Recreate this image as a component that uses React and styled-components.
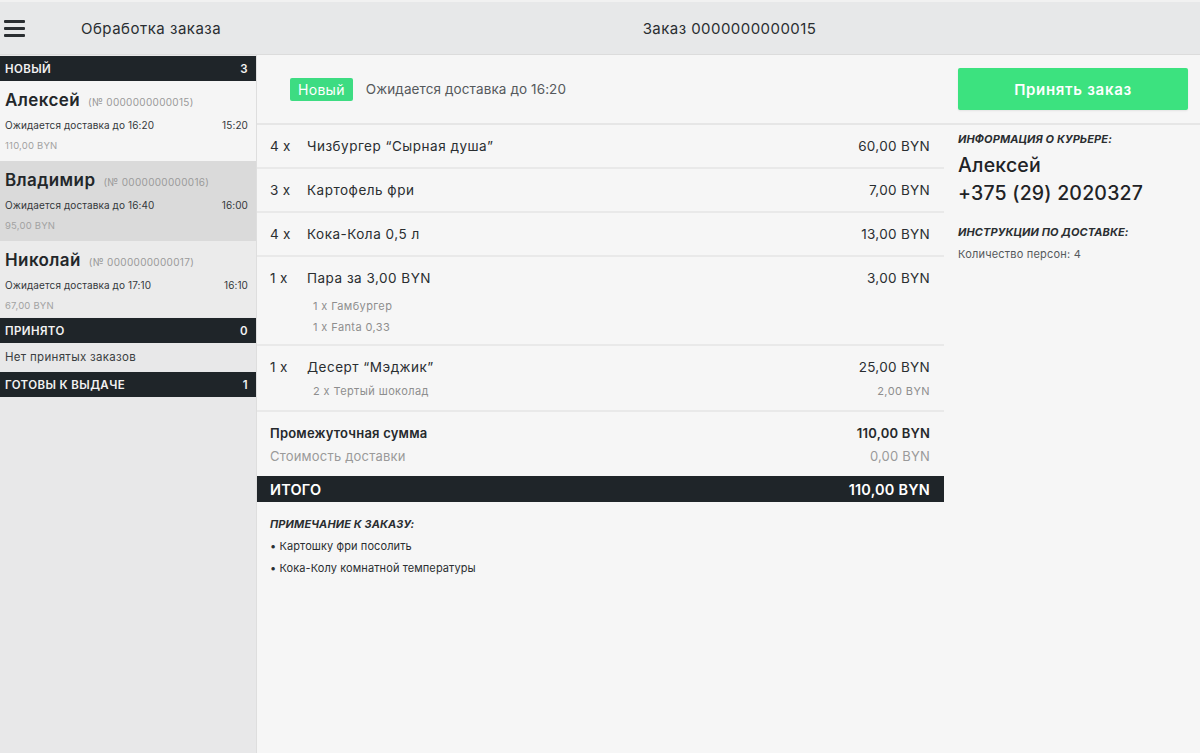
import React from 'react';
import styled, { createGlobalStyle } from 'styled-components';

// ─── DATA ──────────────────────────────────────────────────────

const GROUPS = [
  {
    title: 'Новый',
    count: 3,
    orders: [
      { name: 'Алексей', num: '0000000000015', eta: '16:20', time: '15:20', sum: '110,00 BYN', tone: 'light' },
      { name: 'Владимир', num: '0000000000016', eta: '16:40', time: '16:00', sum: '95,00 BYN', tone: 'active' },
      { name: 'Николай', num: '0000000000017', eta: '17:10', time: '16:10', sum: '67,00 BYN', tone: 'plain' },
    ],
  },
  { title: 'Принято', count: 0, orders: [], empty: 'Нет принятых заказов' },
  { title: 'Готовы к выдаче', count: 1, orders: [] },
];

const ITEMS = [
  { qty: '4 x', name: 'Чизбургер “Сырная душа”', price: '60,00 BYN' },
  { qty: '3 x', name: 'Картофель фри', price: '7,00 BYN' },
  { qty: '4 x', name: 'Кока-Кола 0,5 л', price: '13,00 BYN' },
  { qty: '1 x', name: 'Пара за 3,00 BYN', price: '3,00 BYN', gap: 13, subs: [{ text: '1 x Гамбургер' }, { text: '1 x Fanta 0,33' }] },
  { qty: '1 x', name: 'Десерт “Мэджик”', price: '25,00 BYN', gap: 9, subs: [{ text: '2 x Тертый шоколад', price: '2,00 BYN' }] },
];

// ─── STYLES ────────────────────────────────────────────────────

const GlobalStyle = createGlobalStyle`
  html, body { margin: 0; padding: 0; }
  body {
    font-family: Inter, "Noto Sans", "DejaVu Sans", sans-serif;
    color: #262a2d;
    background: #f6f6f6;
  }
  * { box-sizing: border-box; }
`;

const Page = styled.div`
  width: 1200px;
  height: 753px;
  display: flex;
  flex-direction: column;
  overflow: hidden;
`;

const TopBar = styled.header`
  height: 55px;
  flex-shrink: 0;
  display: grid;
  grid-template-columns: 257px 1fr;
  align-items: center;
  background: #e7e8e9;
  border-top: 2px solid #f1f1f1;
  border-bottom: 1px solid #dcdcdc;
`;

const BarLeft = styled.div`
  display: flex;
  align-items: center;
  padding-left: 4px;
  gap: 56px;
`;

const Burger = styled.div`
  width: 21px;
  display: flex;
  flex-direction: column;
  gap: 4px;
  span {
    height: 3px;
    background: #2a2e31;
    border-radius: 1px;
  }
`;

const BarTitle = styled.div`
  font-size: 15px;
  color: #2a2e31;
  letter-spacing: 0.5px;
`;

const BarCenter = styled.div`
  text-align: center;
  font-size: 15px;
  color: #2a2e31;
  letter-spacing: 0.45px;
  padding-left: 2px;
`;

const Body = styled.div`
  flex: 1;
  display: flex;
  min-height: 0;
`;

const Sidebar = styled.aside`
  width: 257px;
  flex-shrink: 0;
  background: #e8e8e9;
  border-right: 1px solid #dedede;
`;

const GroupHead = styled.div`
  height: 25px;
  margin-top: 1px;
  display: flex;
  align-items: center;
  justify-content: space-between;
  padding: 0 8px 0 5px;
  background: #1f2529;
  color: #f2f2f2;
  font-size: 11.5px;
  font-weight: 600;
  text-transform: uppercase;
  letter-spacing: 0.4px;
`;

const Card = styled.div`
  padding: 9px 8px 8px 5px;
  height: ${p => (p.tone === 'plain' ? 76 : 80)}px;
  background: ${p => (p.tone === 'active' ? '#dadada' : p.tone === 'light' ? '#f5f5f5' : '#ebebeb')};
`;

const CardTop = styled.div`
  display: flex;
  align-items: baseline;
  gap: 8px;
`;

const CardName = styled.span`
  font-size: 17px;
  font-weight: 600;
  color: #23272a;
  letter-spacing: 0.4px;
`;

const CardNum = styled.span`
  font-size: 10px;
  color: #9a9a9a;
  letter-spacing: 0.3px;
`;

const CardMeta = styled.div`
  display: flex;
  justify-content: space-between;
  margin-top: 9px;
  font-size: 10px;
  color: #34383b;
  letter-spacing: 0.1px;
`;

const CardSum = styled.div`
  margin-top: 9px;
  font-size: 9.5px;
  color: #a2a2a2;
  letter-spacing: 0.2px;
`;

const EmptyNote = styled.div`
  height: 28px;
  display: flex;
  align-items: center;
  padding-left: 5px;
  font-size: 11.5px;
  color: #3a3e41;
  letter-spacing: 0.3px;
`;

const Main = styled.main`
  flex: 1;
  display: flex;
  flex-direction: column;
  background: #f6f6f6;
`;

const MainHead = styled.div`
  height: 70px;
  flex-shrink: 0;
  display: grid;
  grid-template-columns: 687px 1fr;
  align-items: center;
  border-bottom: 2px solid #e6e6e6;
`;

const Status = styled.div`
  display: flex;
  align-items: center;
  gap: 13px;
  padding-left: 33px;
`;

const Badge = styled.span`
  background: #3ddc82;
  color: #ffffff;
  font-size: 14px;
  padding: 3px 8px;
  border-radius: 2px;
  letter-spacing: 0.3px;
`;

const StatusText = styled.span`
  font-size: 13.5px;
  color: #55595c;
  letter-spacing: 0.1px;
`;

const AcceptButton = styled.button`
  margin: 0 12px 0 14px;
  height: 42px;
  border: none;
  border-radius: 2px;
  background: #3ce27f;
  color: #ffffff;
  font-family: inherit;
  font-size: 15px;
  font-weight: 600;
  letter-spacing: 0.7px;
  box-shadow: 0 1px 2px rgba(0, 0, 0, 0.08);
`;

const Content = styled.div`
  flex: 1;
  display: grid;
  grid-template-columns: 687px 1fr;
`;

const Order = styled.div`
  display: flex;
  flex-direction: column;
`;

const ItemRow = styled.div`
  padding: 13px 14px 10px 13px;
  border-bottom: 2px solid #e9e9e9;
  min-height: ${p => p.h}px;
`;

const Line = styled.div`
  display: flex;
  align-items: baseline;
  font-size: 13.5px;
  color: #2a2e31;
  letter-spacing: 0.3px;
`;

const Qty = styled.span`
  width: 37px;
  flex-shrink: 0;
`;

const Name = styled.span`
  flex: 1;
  letter-spacing: 0.5px;
`;

const SubLine = styled.div`
  display: flex;
  justify-content: space-between;
  padding-left: 43px;
  margin-top: ${p => p.gap}px;
  font-size: 11px;
  color: #8e8e8e;
  letter-spacing: 0.4px;
`;

const Totals = styled.div`
  padding: 13px 14px 12px 13px;
  display: flex;
  flex-direction: column;
  gap: 7px;
`;

const TotalLine = styled.div`
  display: flex;
  justify-content: space-between;
  font-size: 13px;
  font-weight: ${p => (p.muted ? 400 : 600)};
  color: ${p => (p.muted ? '#9a9a9a' : '#25292c')};
  letter-spacing: 0.2px;
`;

const GrandTotal = styled.div`
  height: 26px;
  display: flex;
  align-items: center;
  justify-content: space-between;
  padding: 0 14px 0 13px;
  background: #1f2529;
  color: #ffffff;
  font-size: 14.5px;
  font-weight: 600;
  letter-spacing: 0.2px;
`;

const Notes = styled.div`
  padding: 15px 13px;
`;

const Caption = styled.div`
  font-size: 11px;
  font-weight: 700;
  font-style: italic;
  color: #2a2e31;
  text-transform: uppercase;
  letter-spacing: 0.1px;
`;

const NoteLine = styled.div`
  margin-top: 8px;
  font-size: 11px;
  color: #2a2e31;
  letter-spacing: 0.1px;
`;

const Courier = styled.div`
  padding: 7px 14px;
`;

const CourierName = styled.div`
  margin-top: 5px;
  font-size: 19.5px;
  font-weight: 500;
  color: #1f2326;
  line-height: 28px;
  letter-spacing: 0.2px;
`;

const Instructions = styled.div`
  margin-top: 18px;
`;

const Small = styled.div`
  margin-top: 8px;
  font-size: 11px;
  color: #55595c;
  letter-spacing: 0.2px;
`;

// ─── COMPONENT ─────────────────────────────────────────────────

export default function App() {
  return (
    <Page>
      <GlobalStyle />
      <TopBar>
        <BarLeft>
          <Burger><span /><span /><span /></Burger>
          <BarTitle>Обработка заказа</BarTitle>
        </BarLeft>
        <BarCenter>Заказ 0000000000015</BarCenter>
      </TopBar>

      <Body>
        <Sidebar>
          {GROUPS.map(g => (
            <React.Fragment key={g.title}>
              <GroupHead>
                <span>{g.title}</span>
                <span>{g.count}</span>
              </GroupHead>
              {g.orders.map(o => (
                <Card key={o.num} tone={o.tone}>
                  <CardTop>
                    <CardName>{o.name}</CardName>
                    <CardNum>(№ {o.num})</CardNum>
                  </CardTop>
                  <CardMeta>
                    <span>Ожидается доставка до {o.eta}</span>
                    <span>{o.time}</span>
                  </CardMeta>
                  <CardSum>{o.sum}</CardSum>
                </Card>
              ))}
              {g.empty && <EmptyNote>{g.empty}</EmptyNote>}
            </React.Fragment>
          ))}
        </Sidebar>

        <Main>
          <MainHead>
            <Status>
              <Badge>Новый</Badge>
              <StatusText>Ожидается доставка до 16:20</StatusText>
            </Status>
            <AcceptButton>Принять заказ</AcceptButton>
          </MainHead>

          <Content>
            <Order>
              {ITEMS.map(it => (
                <ItemRow key={it.name} h={it.subs ? (it.subs.length > 1 ? 88 : 66) : 44}>
                  <Line>
                    <Qty>{it.qty}</Qty>
                    <Name>{it.name}</Name>
                    <span>{it.price}</span>
                  </Line>
                  {it.subs && it.subs.map((s, i) => (
                    <SubLine key={s.text} gap={i === 0 ? it.gap : 7}>
                      <span>{s.text}</span>
                      {s.price && <span>{s.price}</span>}
                    </SubLine>
                  ))}
                </ItemRow>
              ))}

              <Totals>
                <TotalLine>
                  <span>Промежуточная сумма</span>
                  <span>110,00 BYN</span>
                </TotalLine>
                <TotalLine muted>
                  <span>Стоимость доставки</span>
                  <span>0,00 BYN</span>
                </TotalLine>
              </Totals>

              <GrandTotal>
                <span>ИТОГО</span>
                <span>110,00 BYN</span>
              </GrandTotal>

              <Notes>
                <Caption>Примечание к заказу:</Caption>
                <NoteLine>• Картошку фри посолить</NoteLine>
                <NoteLine>• Кока-Колу комнатной температуры</NoteLine>
              </Notes>
            </Order>

            <Courier>
              <Caption>Информация о курьере:</Caption>
              <CourierName>
                Алексей<br />+375 (29) 2020327
              </CourierName>
              <Instructions>
                <Caption>Инструкции по доставке:</Caption>
                <Small>Количество персон: 4</Small>
              </Instructions>
            </Courier>
          </Content>
        </Main>
      </Body>
    </Page>
  );
}
